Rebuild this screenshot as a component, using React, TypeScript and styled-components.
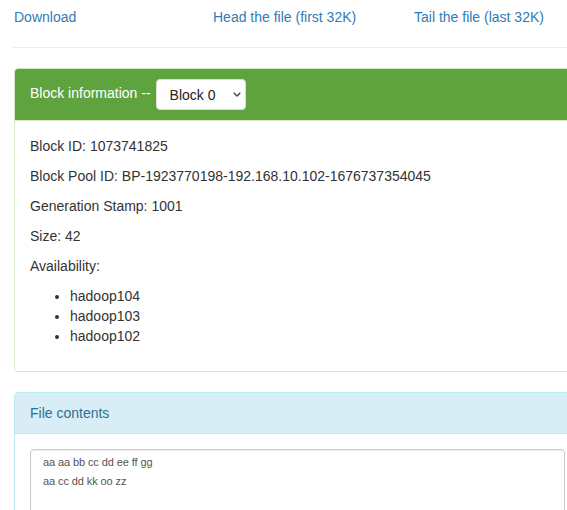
import styled, { createGlobalStyle } from 'styled-components';
import { useState } from 'react';

const GlobalStyle = createGlobalStyle`
  html, body {
    margin: 0;
    padding: 0;
    background: #fff;
    overflow: hidden;
  }
  body {
    font-family: "Liberation Sans", Arial, Helvetica, sans-serif;
    font-size: 14px;
    line-height: 20px;
    color: #333;
  }
`

const Body = styled.div`
  width: 567px;
  padding: 7px 0 0 14px;
`

const LinkRow = styled.div`
  display: grid;
  grid-template-columns: repeat(3, 199px);
  margin: 0 -15px;
`

const LinkCol = styled.div<{ $shift?: number }>`
  padding: 0 15px 0 ${({ $shift }) => 15 + ($shift || 0)}px;
`

const Link = styled.a`
  color: #337ab7;
  text-decoration: none;
  cursor: pointer;
`

const Rule = styled.hr`
  margin: 20px 0;
  border: 0;
  border-top: 1px solid #eee;
  margin-left: -1px;
  width: 600px;
`

const Panel = styled.div<{ $border: string }>`
  border: 1px solid ${({ $border }) => $border};
  border-radius: 4px;
  margin-bottom: 20px;
  background: #fff;
`

const Heading = styled.div<{ $bg: string; $fg: string; $border: string }>`
  display: flex;
  align-items: center;
  padding: 10px 15px;
  min-height: 20px;
  background: ${({ $bg }) => $bg};
  color: ${({ $fg }) => $fg};
  border-bottom: 1px solid ${({ $border }) => $border};
  border-radius: 3px 3px 0 0;
`

const HeadLabel = styled.span`
  padding-bottom: 3px;
`

const SelectWrap = styled.span`
  position: relative;
  display: inline-flex;
  margin-left: 5px;
`

const BlockSelect = styled.select`
  appearance: none;
  width: 90px;
  height: 31px;
  padding: 0 20px 0 13px;
  font-family: "Liberation Sans", Arial, sans-serif;
  font-size: 14px;
  color: #222;
  background: #fff;
  border: 1px solid #ddd;
  border-radius: 4px;
  outline: none;
`

const Chevron = styled.svg`
  position: absolute;
  right: 5px;
  top: 13px;
  pointer-events: none;
`

const PanelBody = styled.div`
  padding: 15px;
`

const Para = styled.p`
  margin: 0 0 10px;
`

const HostList = styled.ul`
  margin: 0 0 10px;
  padding-left: 40px;
`

const Contents = styled.textarea`
  display: block;
  box-sizing: border-box;
  width: 100%;
  height: 90px;
  padding: 3px 12px;
  font-family: "Liberation Sans", Arial, sans-serif;
  font-size: 11px;
  line-height: 19px;
  letter-spacing: -0.1px;
  color: #555;
  border: 1px solid #ccc;
  border-radius: 4px;
  box-shadow: inset 0 1px 1px rgba(0, 0, 0, .075);
  resize: none;
  outline: none;
`

const hosts = ['hadoop104', 'hadoop103', 'hadoop102'];

const App: React.FC = () => {
  const [block, setBlock] = useState('0');

  return (
    <>
      <GlobalStyle />
      <Body>
        <LinkRow>
          <LinkCol><Link>Download</Link></LinkCol>
          <LinkCol><Link>Head the file (first 32K)</Link></LinkCol>
          <LinkCol $shift={2}><Link>Tail the file (last 32K)</Link></LinkCol>
        </LinkRow>
        <Rule />

        <Panel $border="#d6e9c6">
          <Heading $bg="#5fa33e" $fg="#fff" $border="#d6e9c6">
            <HeadLabel>Block information --</HeadLabel>
            <SelectWrap>
              <BlockSelect value={block} onChange={e => setBlock(e.target.value)}>
                <option value="0">Block 0</option>
              </BlockSelect>
              <Chevron width="8" height="5" viewBox="0 0 8 5">
                <path d="M0.7 0.7l3.3 3.3L7.3 0.7" fill="none" stroke="#444" strokeWidth="1.3" />
              </Chevron>
            </SelectWrap>
          </Heading>
          <PanelBody>
            <Para>Block ID: 1073741825</Para>
            <Para>Block Pool ID: BP-1923770198-192.168.10.102-1676737354045</Para>
            <Para>Generation Stamp: 1001</Para>
            <Para>Size: 42</Para>
            <Para>Availability:</Para>
            <HostList>
              {hosts.map(h => <li key={h}>{h}</li>)}
            </HostList>
          </PanelBody>
        </Panel>

        <Panel $border="#bce8f1">
          <Heading $bg="#d9edf7" $fg="#31708f" $border="#bce8f1">File contents</Heading>
          <PanelBody>
            <Contents readOnly defaultValue={'aa aa bb cc dd ee ff gg\naa cc dd kk oo zz'} />
          </PanelBody>
        </Panel>
      </Body>
    </>
  );
}

export default App;
